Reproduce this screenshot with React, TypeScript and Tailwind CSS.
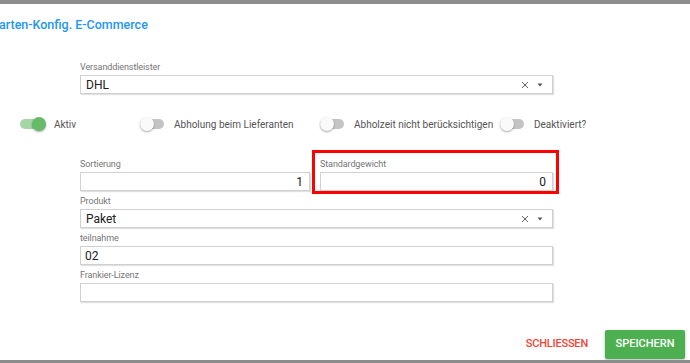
import React, { useState } from 'react';

const Label: React.FC<{ children: React.ReactNode }> = ({ children }) => (
  <div className="text-[9px] leading-[11px] text-[#757575] mb-[2px] tracking-[-0.1px]">{children}</div>
);

const boxCls =
  'h-[19px] w-full border border-[#d0d0d0] bg-white shadow-[1px_1px_1px_rgba(0,0,0,0.12)] flex items-center text-[12px] text-[#212121]';

const TextField: React.FC<{ label: string; value?: string; right?: boolean }> = ({ label, value = '', right }) => (
  <div>
    <Label>{label}</Label>
    <div className={boxCls + (right ? ' justify-end pr-[6px]' : ' pl-[4px]')}>{value}</div>
  </div>
);

const SelectField: React.FC<{ label: string; value: string }> = ({ label, value }) => (
  <div>
    <Label>{label}</Label>
    <div className={boxCls + ' pl-[5px] pr-[9px]'}>
      <span className="flex-1">{value}</span>
      <svg width="8" height="8" viewBox="0 0 8 8" className="mr-[8px]">
        <path d="M1 1L7 7M7 1L1 7" stroke="#666" strokeWidth="1" />
      </svg>
      <svg width="6" height="4" viewBox="0 0 6 4">
        <path d="M0.5 0.5H5.5L3 3.5Z" fill="#555" />
      </svg>
    </div>
  </div>
);

const Toggle: React.FC<{ on: boolean; label: string; width: string }> = ({ on, label, width }) => (
  <div className={'flex items-center shrink-0 ' + width}>
    <div className="relative w-[26px] h-[14px] flex items-center shrink-0">
      <div className={'w-[24px] h-[10px] rounded-full ' + (on ? 'bg-[#a5d6a7]' : 'bg-[#c4c4c4]')} />
      <div
        className={
          'absolute top-0 w-[14px] h-[14px] rounded-full shadow-[0_1px_2px_rgba(0,0,0,0.35)] ' +
          (on ? 'left-[12px] bg-[#66bb6a]' : 'left-0 bg-[#fafafa]')
        }
      />
    </div>
    <span className="ml-[8px] text-[10px] text-[#555] whitespace-nowrap">{label}</span>
  </div>
);

export default function App() {
  const [saved] = useState(false);
  return (
    <div className="w-[690px] h-[363px] bg-white flex flex-col overflow-hidden" style={{ fontFamily: 'Roboto, "Liberation Sans", sans-serif' }}>
      <div className="h-[4px] bg-[#8c8c8c]" />
      {/* Titel */}
      <div className="h-[42px] flex items-center">
        <h1 className="text-[12.5px] font-medium text-[#2196f3] leading-none -ml-[1px]">arten-Konfig. E-Commerce</h1>
      </div>

      <div className="pl-[80px] w-[553px] pt-[16px]">
        <SelectField label="Versanddienstleister" value="DHL" />
      </div>

      {/* Schalter */}
      <div className="flex items-center pl-[20px] mt-[23px] h-[14px]">
        <Toggle on label="Aktiv" width="w-[120px]" />
        <Toggle on={false} label="Abholung beim Lieferanten" width="w-[180px]" />
        <Toggle on={false} label="Abholzeit nicht berücksichtigen" width="w-[180px]" />
        <Toggle on={false} label="Deaktiviert?" width="" />
      </div>

      <div className="pl-[80px] w-[553px] mt-[28px] flex flex-col gap-[5px]">
        <div className="grid grid-cols-[230px_1fr] gap-[10px]">
          <TextField label="Sortierung" value="1" right />
          <div className="relative">
            <div className="absolute -left-[8px] -right-[6px] -top-[9px] -bottom-[3px] border-[3px] border-[#ff0000]" />
            <TextField label="Standardgewicht" value="0" right />
          </div>
        </div>
        <SelectField label="Produkt" value="Paket" />
        <TextField label="teilnahme" value="02" />
        <TextField label="Frankier-Lizenz" />
      </div>

      {/* Aktionen */}
      <div className="flex justify-end items-center mt-[28px] pr-[5px]">
        <button className="text-[11px] font-medium text-[#f44336] mr-[17px] tracking-[-0.2px]">SCHLIESSEN</button>
        <button className="w-[80px] h-[29px] rounded-[2px] bg-[#4caf50] text-white text-[11px] font-medium shadow-[0_1px_3px_rgba(0,0,0,0.3)]">
          {saved ? 'GESPEICHERT' : 'SPEICHERN'}
        </button>
      </div>
      <div className="flex-1" />
      <div className="h-[3px] bg-[#8c8c8c]" />
    </div>
  );
}
